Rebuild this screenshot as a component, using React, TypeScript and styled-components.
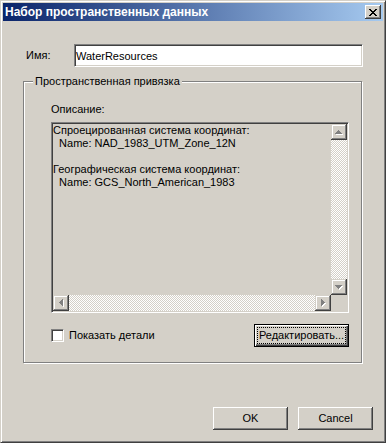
import React from 'react';
import styled, { createGlobalStyle } from 'styled-components';

const DESCRIPTION = [
  'Спроецированная система координат:',
  '  Name: NAD_1983_UTM_Zone_12N',
  '',
  'Географическая система координат:',
  '  Name: GCS_North_American_1983',
];

const ARROWS: Record<string, { d: string; w: number; h: number }> = {
  up: { d: 'M3 0h1v1h1v1h1v1h1v1H0V3h1V2h1V1h1z', w: 7, h: 4 },
  down: { d: 'M0 0h7v1h-1v1h-1v1h-1v1H3V3H2V2H1V1H0z', w: 7, h: 4 },
  left: { d: 'M3 0h1v7H3V6H2V5H1V4H0V3h1V2h1V1h1z', w: 4, h: 7 },
  right: { d: 'M0 0h1v1h1v1h1v1h1v1H3v1H2v1H1v1H0z', w: 4, h: 7 },
};

const GlobalStyle = createGlobalStyle`
  html, body {
    margin: 0;
    padding: 0;
    background: #d4d0c8;
  }
  body {
    font-family: "Liberation Sans", Arial, sans-serif;
    font-size: 11px;
  }
`;

const Arrow: React.FC<{ dir: string }> = ({ dir }) => {
  const a = ARROWS[dir];
  return (
    <svg width={a.w + 1} height={a.h + 1} viewBox={`0 0 ${a.w + 1} ${a.h + 1}`} shapeRendering="crispEdges">
      <path d={a.d} fill="#fff" transform="translate(1 1)" />
      <path d={a.d} fill="#808080" />
    </svg>
  );
};

const CloseGlyph = () => (
  <svg width="8" height="7" viewBox="0 0 8 7" shapeRendering="crispEdges">
    <path
      fill="#000"
      d="M0 0h2v1H0zM6 0h2v1H6zM1 1h2v1H1zM5 1h2v1H5zM2 2h4v1H2zM3 3h2v1H3zM2 4h4v1H2zM1 5h2v1H1zM5 5h2v1H5zM0 6h2v1H0zM6 6h2v1H6z"
    />
  </svg>
);

const App: React.FC = () => {
  return (
    <>
      <GlobalStyle />
      <Window>
        <TitleBar>
          <Caption>Набор пространственных данных</Caption>
          <CloseButton aria-label="close">
            <CloseGlyph />
          </CloseButton>
        </TitleBar>

        <Client>
          <NameRow>
            <NameLabel>Имя:</NameLabel>
            <NameInput defaultValue="WaterResources" />
          </NameRow>

          <Group>
            <GroupTitle>Пространственная привязка</GroupTitle>
            <GroupBody>
              <FieldLabel>Описание:</FieldLabel>
              <TextBox>
                <TextContent>
                  {DESCRIPTION.map((line, i) => (
                    <Line key={i}>{line || ' '}</Line>
                  ))}
                </TextContent>
                <VScroll>
                  <ScrollButton><Arrow dir="up" /></ScrollButton>
                  <Track />
                  <ScrollButton><Arrow dir="down" /></ScrollButton>
                </VScroll>
                <HScroll>
                  <ScrollButton><Arrow dir="left" /></ScrollButton>
                  <Track />
                  <ScrollButton><Arrow dir="right" /></ScrollButton>
                </HScroll>
                <Corner />
              </TextBox>

              <CheckRow>
                <CheckLabel>
                  <CheckBox />
                  Показать детали
                </CheckLabel>
                <DefaultButton>
                  <FocusRect>Редактировать...</FocusRect>
                </DefaultButton>
              </CheckRow>
            </GroupBody>
          </Group>

          <Footer>
            <PushButton>OK</PushButton>
            <PushButton>Cancel</PushButton>
          </Footer>
        </Client>
      </Window>
    </>
  );
};

const Window = styled.div`
  box-sizing: border-box;
  width: 386px;
  height: 443px;
  background: #d4d0c8;
  border: 1px solid;
  border-color: #d4d0c8 #404040 #404040 #d4d0c8;
  box-shadow: inset 1px 1px 0 #fff, inset -1px -1px 0 #808080;
  padding: 2px;
  display: flex;
  flex-direction: column;
  color: #000;
  line-height: 13px;
`;

const TitleBar = styled.div`
  height: 18px;
  flex: none;
  display: flex;
  align-items: center;
  justify-content: space-between;
  padding: 0 2px 0 2px;
  background: linear-gradient(90deg, #0a246a 0%, #a6caf0 100%);
`;

const Caption = styled.span`
  color: #fff;
  font-weight: bold;
  font-size: 12px;
`;

const raised = `
  box-shadow: inset -1px -1px 0 #404040, inset 1px 1px 0 #fff,
    inset -2px -2px 0 #808080, inset 2px 2px 0 #d4d0c8;
`;

const sunken = `
  border: 1px solid;
  border-color: #808080 #fff #fff #808080;
  box-shadow: inset 1px 1px 0 #404040, inset -1px -1px 0 #d4d0c8;
`;

const CloseButton = styled.button`
  width: 16px;
  height: 14px;
  padding: 0;
  border: none;
  background: #d4d0c8;
  display: flex;
  align-items: center;
  justify-content: center;
  ${raised}
`;

const Client = styled.div`
  flex: 1;
  display: flex;
  flex-direction: column;
  margin-top: 1px;
`;

const NameRow = styled.div`
  display: flex;
  align-items: center;
  margin: 22px 0 0 23px;
`;

const NameLabel = styled.span`
  width: 48px;
`;

const NameInput = styled.input`
  box-sizing: border-box;
  width: 289px;
  height: 23px;
  margin: 0;
  padding: 0 1px;
  background: #fff;
  font: inherit;
  color: #000;
  outline: none;
  ${sunken}
`;

const Group = styled.div`
  box-sizing: border-box;
  width: 339px;
  margin: 14px 0 0 20px;
  border: 1px solid #808080;
  box-shadow: 1px 1px 0 #fff, inset 1px 1px 0 #fff;
  display: flex;
  flex-direction: column;
  align-items: flex-start;
`;

const GroupTitle = styled.span`
  margin: -7px 0 0 9px;
  padding: 0 2px;
  background: #d4d0c8;
`;

const GroupBody = styled.div`
  display: flex;
  flex-direction: column;
  padding: 15px 0 15px 27px;
`;

const FieldLabel = styled.span``;

const TextBox = styled.div`
  box-sizing: border-box;
  width: 298px;
  height: 191px;
  margin-top: 6px;
  background: #d4d0c8;
  display: grid;
  grid-template-columns: 1fr 16px;
  grid-template-rows: 1fr 16px;
  ${sunken}
  padding: 1px;
`;

const TextContent = styled.div`
  padding: 0;
  white-space: pre;
  overflow: hidden;
`;

const Line = styled.div`
  height: 13px;
`;

const VScroll = styled.div`
  display: flex;
  flex-direction: column;
`;

const HScroll = styled.div`
  display: flex;
`;

const Track = styled.div`
  flex: 1;
  background: repeating-conic-gradient(#fff 0 25%, #d4d0c8 0 50%) 0 0 / 2px 2px;
`;

const ScrollButton = styled.div`
  box-sizing: border-box;
  width: 16px;
  height: 16px;
  flex: none;
  background: #d4d0c8;
  display: flex;
  align-items: center;
  justify-content: center;
  box-shadow: inset -1px -1px 0 #404040, inset 1px 1px 0 #d4d0c8,
    inset -2px -2px 0 #808080, inset 2px 2px 0 #fff;
`;

const Corner = styled.div`
  background: #d4d0c8;
`;

const CheckRow = styled.div`
  width: 298px;
  height: 23px;
  margin-top: 11px;
  display: flex;
  align-items: center;
  justify-content: space-between;
`;

const CheckLabel = styled.label`
  display: flex;
  align-items: center;
  gap: 5px;
`;

const CheckBox = styled.span`
  box-sizing: border-box;
  width: 13px;
  height: 13px;
  background: #fff;
  ${sunken}
`;

const buttonBase = `
  box-sizing: border-box;
  height: 23px;
  margin: 0;
  background: #d4d0c8;
  font: inherit;
  color: #000;
  display: flex;
  align-items: center;
  justify-content: center;
`;

const DefaultButton = styled.button`
  ${buttonBase}
  width: 95px;
  padding: 2px;
  border: 1px solid #000;
  box-shadow: inset 1px 1px 0 #fff, inset -1px -1px 0 #404040,
    inset -2px -2px 0 #808080;
`;

const FocusRect = styled.span`
  flex: 1;
  align-self: stretch;
  display: flex;
  align-items: center;
  justify-content: center;
  border: 1px dotted #000;
`;

const PushButton = styled.button`
  ${buttonBase}
  width: 75px;
  padding: 0;
  border: none;
  ${raised}
`;

const Footer = styled.div`
  margin-top: auto;
  display: flex;
  justify-content: flex-end;
  gap: 10px;
  padding: 0 10px 10px 0;
`;

export default App;
